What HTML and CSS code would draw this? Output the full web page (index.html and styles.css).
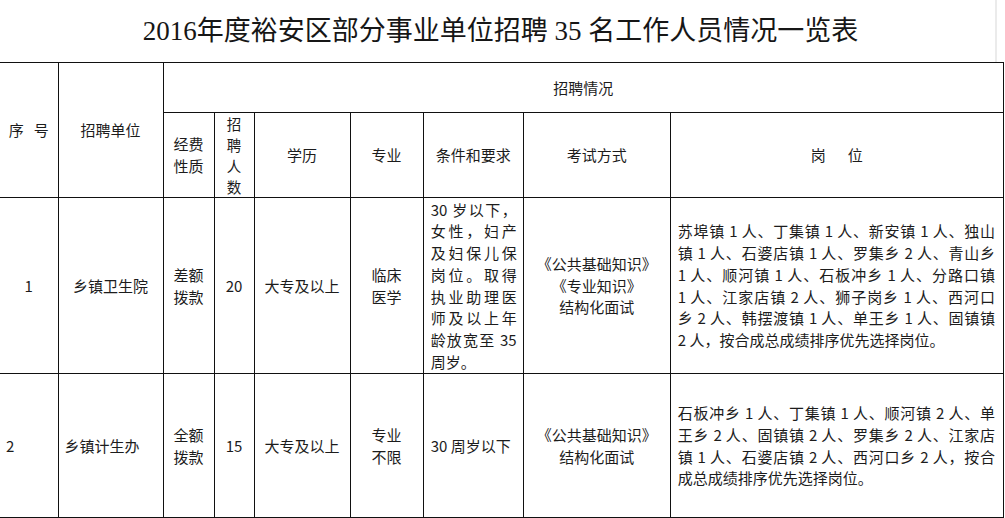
FILE: index.html
```html
<!DOCTYPE html>
<html lang="zh-CN">
<head>
<meta charset="utf-8">
<title>2016年度裕安区部分事业单位招聘35名工作人员情况一览表</title>
<link rel="stylesheet" href="styles.css">
</head>
<body>
<div class="page">
  <div class="title-bar">
    <h1 class="title">2016年度裕安区部分事业单位招聘 35 名工作人员情况一览表</h1>
  </div>
  <table class="grid">
    <colgroup>
      <col class="w-seq">
      <col class="w-unit">
      <col class="w-fund">
      <col class="w-num">
      <col class="w-edu">
      <col class="w-major">
      <col class="w-cond">
      <col class="w-exam">
      <col class="w-post">
    </colgroup>
    <tr class="r-head1">
      <th rowspan="2" class="edge">序<span class="gap-s"></span>号</th>
      <th rowspan="2">招聘单位</th>
      <th colspan="7">招聘情况</th>
    </tr>
    <tr class="r-head2">
      <th>经费<br>性质</th>
      <th class="tight">招<br>聘<br>人<br>数</th>
      <th>学历</th>
      <th>专业</th>
      <th>条件和要求</th>
      <th>考试方式</th>
      <th>岗<span class="gap-l"></span>位</th>
    </tr>
    <tr class="r-body1">
      <td class="edge">1</td>
      <td>乡镇卫生院</td>
      <td>差额<br>拨款</td>
      <td>20</td>
      <td>大专及以上</td>
      <td>临床<br>医学</td>
      <td class="para">
        <span class="ln">30 岁以下，</span>
        <span class="ln">女性，妇产</span>
        <span class="ln">及妇保儿保</span>
        <span class="ln">岗位。取得</span>
        <span class="ln">执业助理医</span>
        <span class="ln">师及以上年</span>
        <span class="ln">龄放宽至 35</span>
        <span class="ln end">周岁。</span>
      </td>
      <td>《公共基础知识》<br>《专业知识》<br>结构化面试</td>
      <td class="para post">
        <span class="ln">苏埠镇 1 人、丁集镇 1 人、新安镇 1 人、独山</span>
        <span class="ln">镇 1 人、石婆店镇 1 人、罗集乡 2 人、青山乡</span>
        <span class="ln">1 人、顺河镇 1 人、石板冲乡 1 人、分路口镇</span>
        <span class="ln">1 人、江家店镇 2 人、狮子岗乡 1 人、西河口</span>
        <span class="ln">乡 2 人、韩摆渡镇 1 人、单王乡 1 人、固镇镇</span>
        <span class="ln end">2 人，按合成总成绩排序优先选择岗位。</span>
      </td>
    </tr>
    <tr class="r-body2">
      <td class="edge left">2</td>
      <td class="left">乡镇计生办</td>
      <td>全额<br>拨款</td>
      <td>15</td>
      <td>大专及以上</td>
      <td>专业<br>不限</td>
      <td class="para"><span class="ln end">30 周岁以下</span></td>
      <td>《公共基础知识》<br>结构化面试</td>
      <td class="para post">
        <span class="ln">石板冲乡 1 人、丁集镇 1 人、顺河镇 2 人、单</span>
        <span class="ln">王乡 2 人、固镇镇 2 人、罗集乡 2 人、江家店</span>
        <span class="ln">镇 1 人、石婆店镇 2 人、西河口乡 2 人，按合</span>
        <span class="ln end">成总成绩排序优先选择岗位。</span>
      </td>
    </tr>
  </table>
</div>
</body>
</html>
```

FILE: styles.css
```css
html, body {
  margin: 0;
  padding: 0;
  background: #ffffff;
}

.page {
  width: 1005px;
  color: #1c1c1c;
  font-family: "Noto Sans CJK SC", "Noto Sans", sans-serif;
}

.title-bar {
  width: 997px;
  height: 62px;
  display: flex;
  align-items: center;
  justify-content: center;
  border-right: 2px solid #ebebeb;
  box-sizing: border-box;
}

.title {
  margin: 0 0 0 6px;
  font-family: "Liberation Serif", "Noto Sans CJK SC", serif;
  font-weight: normal;
  font-size: 27px;
  line-height: 40px;
  color: #161616;
  white-space: nowrap;
}

.grid {
  border-collapse: collapse;
  table-layout: fixed;
  width: 1004px;
  font-size: 15px;
  line-height: 21.75px;
}

.w-seq { width: 58px; }
.w-unit { width: 105px; }
.w-fund { width: 51px; }
.w-num { width: 40px; }
.w-edu { width: 96px; }
.w-major { width: 73px; }
.w-cond { width: 100px; }
.w-exam { width: 147px; }
.w-post { width: 333px; }

.grid th,
.grid td {
  border: 1px solid #111;
  padding: 0;
  text-align: center;
  vertical-align: middle;
  font-weight: normal;
  white-space: nowrap;
}

.grid .edge {
  border-left: none;
}

.grid .tight {
  font-size: 14.5px;
  line-height: 21px;
}

.r-head1 { height: 50px; }
.r-head2 { height: 84px; }
.r-body1 { height: 176px; }
.r-body2 { height: 144px; }

.grid .left {
  text-align: left;
  padding-left: 6px;
}

.grid .para {
  text-align: left;
  padding: 0 6px 0 7px;
}

.grid .post {
  padding: 0 8px 0 7px;
}

.ln {
  display: block;
  text-align: justify;
  text-align-last: justify;
}

.ln.end {
  text-align-last: left;
}

.gap-s {
  display: inline-block;
  width: 10px;
}

.gap-l {
  display: inline-block;
  width: 22px;
}
```
